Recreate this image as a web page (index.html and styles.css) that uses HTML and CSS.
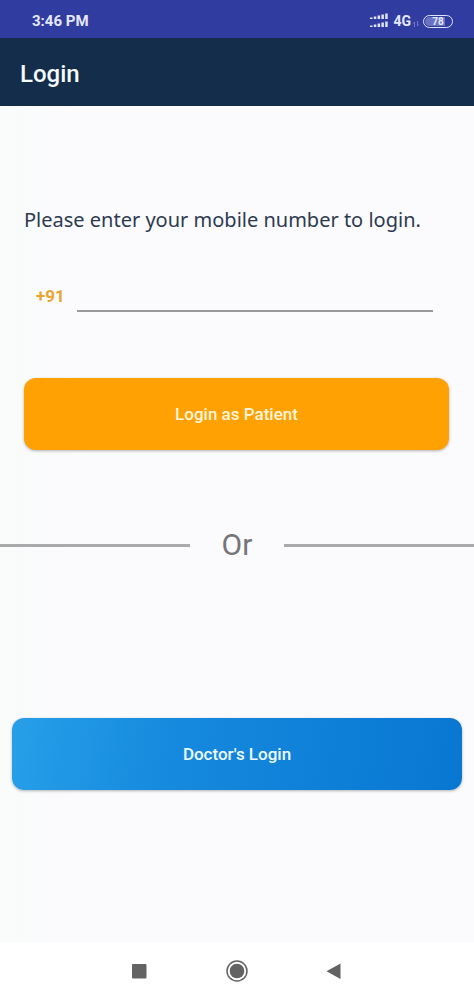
FILE: index.html
```html
<!DOCTYPE html>
<html lang="en">
<head>
  <meta charset="UTF-8">
  <meta name="viewport" content="width=device-width, initial-scale=1.0">
  <title>Login</title>
  <link rel="stylesheet" href="styles.css">
</head>
<body>
  <div class="status-bar">
    <span class="time">3:46 PM</span>
    <div class="status-icons">
      <svg class="signal" width="20" height="16" viewBox="0 0 20 16" fill="#dfe3ff">
        <path d="M1 4.500h2.500v1.500H1zM4.800 3.500h2.500V6H4.800zM8.600 2.500h2.500V6H8.600zM12.400 1.500h2.500V6h-2.500zM16.200.5h2.500V6h-2.500z"/>
        <path d="M1 12.500h2.500v1.500H1zM4.800 11.500h2.500V14H4.800zM8.600 10.500h2.500V14H8.600zM12.400 9.500h2.500V14h-2.500zM16.200 8.500h2.500V14h-2.500z"/>
      </svg>
      <span class="network">4G</span>
      <svg class="data" width="6" height="6" viewBox="0 0 6 6" stroke="#7078c8" fill="none">
        <path d="M1.500 6V1L.5 2.500M4.500 0v5l1-1.500"/>
      </svg>
      <span class="battery"><span class="level">78</span></span>
    </div>
  </div>

  <header>
    <h1>Login</h1>
  </header>

  <main>
    <form class="patient-form">
      <label class="prompt" for="mobile">Please enter your mobile number to login.</label>
      <div class="phone-row">
        <span class="code">+91</span>
        <input type="tel" id="mobile" name="mobile">
      </div>
      <button type="button" class="btn patient">Login as Patient</button>
    </form>

    <div class="divider">Or</div>

    <div class="doctor-box">
      <button type="button" class="btn doctor">Doctor's Login</button>
    </div>
  </main>

  <nav class="nav-bar">
    <button type="button" aria-label="Recent apps">
      <svg width="24" height="24" viewBox="0 0 24 24" fill="#636363"><rect x="4" y="5" width="14.500" height="14.500" rx="1"/></svg>
    </button>
    <button type="button" aria-label="Home">
      <svg width="24" height="24" viewBox="0 0 24 24"><circle cx="12" cy="12" r="10" fill="none" stroke="#636363" stroke-width="1.500"/><circle cx="12" cy="12" r="7.300" fill="#636363"/></svg>
    </button>
    <button type="button" aria-label="Back">
      <svg width="24" height="24" viewBox="0 0 24 24" fill="#636363"><path d="M18.500 4.500v15.500L4.500 12.200z"/></svg>
    </button>
  </nav>
</body>
</html>
```
FILE: styles.css
```css
/* Global Styling */
* {
  box-sizing: border-box;
}

body {
  font-family: Roboto, sans-serif;
  margin: 0;
  min-height: 100vh;
  display: flex;
  flex-direction: column;
  background-color: #fbfafd;
}

button {
  font-family: inherit;
  border: none;
  cursor: pointer;
}

/* Status bar */
.status-bar {
  display: flex;
  align-items: center;
  justify-content: space-between;
  height: 38px;
  padding: 4px 21px 0 32px;
  background-color: #313ca0;
  color: #e4e8ff;
}

.time {
  font-size: 15px;
  font-weight: 700;
}

.status-icons {
  display: flex;
  align-items: center;
}

.network {
  margin-left: 4px;
  font-size: 14px;
  font-weight: 700;
}

.data {
  margin: 6px 4px 0 2px;
}

.battery {
  display: flex;
  width: 30px;
  height: 13px;
  padding: 1px;
  border: 1px solid #dfe3ff;
  border-radius: 7px;
}

.level {
  flex: 1;
  border-radius: 5px;
  background: linear-gradient(to right, #6a73c2 78%, transparent 78%);
  font-size: 10px;
  font-weight: 700;
  line-height: 10px;
  text-align: center;
}

/* App bar */
header {
  display: flex;
  align-items: center;
  height: 68px;
  padding: 4px 20px 0;
  background-color: #142d4a;
  color: #f4faff;
}

h1 {
  margin: 0;
  font-size: 24px;
  font-weight: 500;
}

/* Page content */
main {
  flex: 1;
  background: linear-gradient(to right, #f9fcfb, #fbfafd 16%);
}

.patient-form {
  display: flex;
  flex-direction: column;
  padding: 100px 25px 0 24px;
}

.prompt {
  font-family: "Noto Sans", sans-serif;
  font-size: 20px;
  line-height: 28px;
  color: #2c3a50;
}

.phone-row {
  display: flex;
  align-items: center;
  margin: 46px 16px 66px 12px;
}

.code {
  margin-right: 12px;
  font-size: 17px;
  font-weight: 700;
  color: #eba52c;
}

#mobile {
  flex: 1;
  min-width: 0;
  height: 32px;
  padding: 0;
  border: none;
  border-bottom: 2px solid #9b999d;
  background: transparent;
  font-family: inherit;
  font-size: 18px;
  outline: none;
}

.btn {
  width: 100%;
  height: 72px;
  border-radius: 12px;
  font-size: 17px;
  font-weight: 500;
  box-shadow: 0 1px 3px rgba(0, 0, 0, 0.3);
}

.patient {
  background-color: #ffa003;
  color: #fff6dc;
}

.doctor {
  background: linear-gradient(100deg, #279fe8, #168ade 35%, #0877d2);
  color: #effaff;
}

.divider {
  display: flex;
  align-items: center;
  gap: 32px;
  margin-top: 75px;
  font-size: 30px;
  line-height: 40px;
  color: #757478;
}

.divider::before,
.divider::after {
  content: "";
  flex: 1;
  height: 3px;
  background-color: #aaa9ac;
}

.doctor-box {
  padding: 153px 12px 0;
}

/* Navigation bar */
.nav-bar {
  display: flex;
  justify-content: center;
  gap: 73px;
  height: 58px;
  background-color: #ffffff;
}

.nav-bar button {
  display: flex;
  align-items: center;
  padding: 0;
  background: none;
}
```
